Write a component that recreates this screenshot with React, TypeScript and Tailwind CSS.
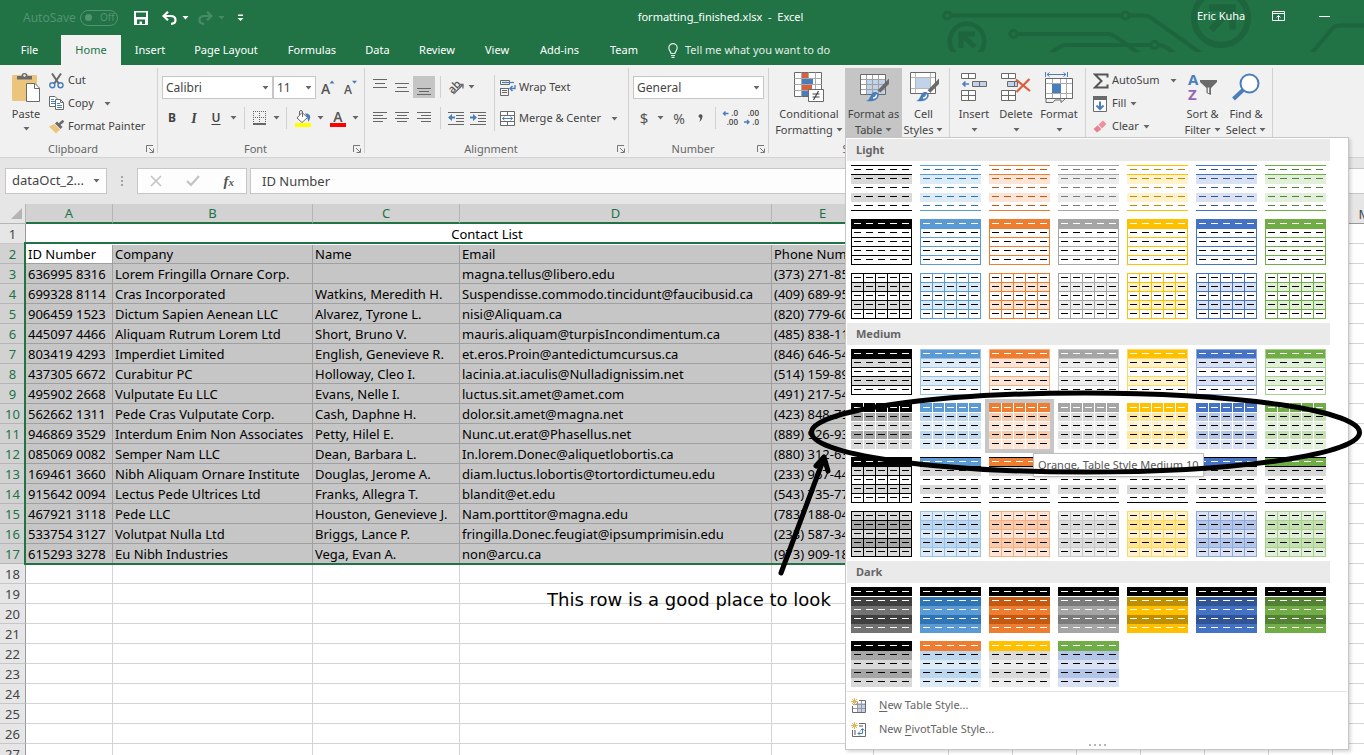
import React from "react";

type Kids = { children?: React.ReactNode };

const G = "#6a6a6a";
const B = "#4a7ebb";

function Caret({ className = "fill-[#666666]" }: { className?: string }) {
  return (
    <svg width="7" height="4" viewBox="0 0 7 4" className={"shrink-0 " + className} aria-hidden="true">
      <path d="M0.5 0h6L3.5 3.4z" />
    </svg>
  );
}

/* ---------- title bar ---------- */

function Circuit() {
  return (
    <svg className="absolute right-0 top-0" width="484" height="52" viewBox="0 0 484 52" fill="none" stroke="#1d653c" strokeWidth="4" aria-hidden="true">
      <circle cx="67.5" cy="15.5" r="3.6" strokeWidth="3" />
      <path d="M72 15.5H241" />
      <circle cx="245.500" cy="15.500" r="3.6" strokeWidth="3" />
      <path d="M250 15.500H264q4 0 8 3L322 54" />
      <circle cx="133.500" cy="34" r="3.6" strokeWidth="3" />
      <path d="M138 34H228q4 0 8 3L260 54" />
      <path d="M168 55L178 48q4-3 8-3H270" />
      <circle cx="274.500" cy="45" r="3.6" strokeWidth="3" />
      <path d="M279 45q4 0 8 3L297 55" />
      <path d="M430 55L452 29q3-3.500 8-3.500H484" />
      <circle cx="87" cy="41" r="17.2" strokeWidth="4.600" />
      <path d="M95 34H81V48M81 34L95 47" strokeWidth="5" />
      <circle cx="341" cy="18" r="27" strokeWidth="6" />
      <path d="M329 7.500H352.500V29.500M352.500 7.500L331 30" strokeWidth="6.500" />
    </svg>
  );
}

function TitleBar() {
  return (
    <div className="relative flex h-[35px] items-center text-white">
      <div className="flex items-center pl-[23px] text-[#559271]">
        <span className="w-[57px] text-[12px]">AutoSave</span>
        <button className="flex h-[16px] w-[38px] items-center gap-[8px] rounded-full border border-[#559271] pl-[4px] text-[10px]" aria-label="AutoSave">
          <span className="size-[7px] rounded-full bg-[#559271]" />
          Off
        </button>
      </div>
      <button className="ml-[16px]" aria-label="Save">
        <svg width="14" height="14" viewBox="0 0 14 14" className="block">
          <path fill="#fff" fillRule="evenodd" d="M0 0H14V14H0zM2 1.500V6h10V1.500zM3 8.500V13H5.500V10.500H8V13h3V8.500z" />
        </svg>
      </button>
      <button className="ml-[14px] flex items-center gap-[5px]" aria-label="Undo">
        <svg width="15" height="14" viewBox="0 0 15 14" fill="none" stroke="#fff" strokeWidth="2.200">
          <path d="M6 0.800L1.500 5L6 9.200M2 5H8.500C12.200 5 13.500 7 13.500 9C13.500 11.500 11.500 12.800 9 12.800" />
        </svg>
        <Caret className="fill-white" />
      </button>
      <button className="ml-[9px] flex items-center gap-[5px]" aria-label="Redo">
        <svg width="15" height="14" viewBox="0 0 15 14" fill="none" stroke="#488b67" strokeWidth="2.200">
          <path d="M9 0.800L13.500 5L9 9.200M13 5H6.500C2.800 5 1.500 7 1.500 9C1.500 11.500 3.500 12.800 6 12.800" />
        </svg>
        <Caret className="fill-[#488b67]" />
      </button>
      <button className="ml-[12px]" aria-label="Customize Quick Access Toolbar">
        <svg width="7" height="8" viewBox="0 0 7 8" fill="#fff">
          <path d="M1 0.500H6V2H1zM0.500 4H6.500L3.500 7z" />
        </svg>
      </button>
      <Circuit />
      <h1 className="min-w-0 flex-1 truncate pb-[2px] text-center text-[11px] leading-[16px] whitespace-pre">formatting_finished.xlsx  -  Excel</h1>
      <span className="relative w-[75px] pb-[2px] text-[11px]">Eric Kuha</span>
      <button className="relative w-[47px]" aria-label="Ribbon Display Options">
        <svg width="13" height="10" viewBox="0 0 13 10" fill="none" stroke="#fff" className="mb-[3px]">
          <path d="M.5 .5h12v9H.5zM0 2.500h13M6.500 9V4.500M4.500 6.500L6.500 4.500L8.500 6.500" />
        </svg>
      </button>
      <button className="relative w-[45px] pb-[3px]" aria-label="Minimize">
        <span className="block h-px w-[11px] bg-white" />
      </button>
    </div>
  );
}

function Tab({ w, active, children }: Kids & { w: string; active?: boolean }) {
  return (
    <button role="tab" aria-selected={!!active} className={"h-[30px] shrink-0 text-center text-[11px] " + w + (active ? " bg-[#f1f1f1] text-[#217346]" : " text-white")}>
      {children}
    </button>
  );
}

function Tabs() {
  return (
    <div role="tablist" className="flex">
      <Tab w="w-[59px]">File</Tab>
      <span className="w-[2px]" />
      <Tab w="w-[60px]" active>Home</Tab>
      <Tab w="w-[58px]">Insert</Tab>
      <Tab w="w-[94px]">Page Layout</Tab>
      <Tab w="w-[78px]">Formulas</Tab>
      <Tab w="w-[53px]">Data</Tab>
      <Tab w="w-[66px]">Review</Tab>
      <Tab w="w-[54px]">View</Tab>
      <Tab w="w-[71px]">Add-ins</Tab>
      <Tab w="w-[58px]">Team</Tab>
      <button className="ml-[15px] flex items-center gap-[7px] text-[11px] text-[#e3eee8]">
        <svg width="10" height="15" viewBox="0 0 10 15" fill="none" stroke="#e3eee8" strokeWidth="1.200">
          <path d="M3 10.500C3 8.500 .8 7.500 .8 4.800A4.200 4.200 0 0 1 9.200 4.800C9.200 7.500 7 8.500 7 10.500zM3 12.500h4M3.500 14.300h3" />
        </svg>
        Tell me what you want to do
      </button>
    </div>
  );
}

/* ---------- ribbon ---------- */

function Group({ label, w, launcher, children }: Kids & { label: string; w: string; launcher?: boolean }) {
  return (
    <section aria-label={label} className={"flex shrink-0 flex-col pt-[3px] pb-[4px] " + w}>
      <div className="flex min-h-0 flex-1 flex-col border-r border-[#d2d2d2]">
        <div className="flex h-[73px] shrink-0">{children}</div>
        <div className="flex h-[16px] shrink-0 items-center pr-[3px]">
          <span className="flex-1 text-center text-[11px] leading-[16px] text-[#666666]">{label}</span>
          {launcher && (
            <button aria-label={label + " settings"}>
              <svg width="8" height="8" viewBox="0 0 8 8" fill="none" stroke="#777" className="block">
                <path d="M.5 7V.5H7M3 3L7 7M7.500 3.500V7.500H3.500" />
              </svg>
            </button>
          )}
        </div>
      </div>
    </section>
  );
}

function Ib({ w = "w-[22px]", label, active, children }: Kids & { w?: string; label: string; active?: boolean }) {
  return (
    <button aria-label={label} className={"flex h-[22px] shrink-0 items-center justify-center " + w + (active ? " bg-[#c5c5c5]" : "")}>
      {children}
    </button>
  );
}

function Sep({ w = "w-[10px]", h = "h-[22px]" }: { w?: string; h?: string }) {
  return (
    <span className={"flex shrink-0 justify-center " + w + " " + h}>
      <span className="w-px bg-[#d2d2d2]" />
    </span>
  );
}

function Pick({ w, label, value }: { w: string; label: string; value: string }) {
  return (
    <span className={"relative flex h-[23px] " + w}>
      <select aria-label={label} className="w-full appearance-none border border-[#c6c6c6] bg-white pl-[3px] text-[12px] text-[#444444]">
        <option>{value}</option>
      </select>
      <span className="pointer-events-none absolute right-[4px] top-[10px]">
        <Caret className="block fill-[#666666]" />
      </span>
    </span>
  );
}

function SmallRow({ icon, caret, gap = "gap-[6px]", children }: Kids & { icon: React.ReactNode; caret?: boolean; gap?: string }) {
  return (
    <button className={"flex h-[23px] items-center text-left whitespace-nowrap " + gap}>
      <span className="flex items-center">
        <span className="flex w-[19px] shrink-0 items-center">{icon}</span>
        {children}
      </span>
      {caret && <Caret />}
    </button>
  );
}

function Big({ icon, w, line1, line2, active }: { icon: React.ReactNode; w: string; line1: string; line2?: string; active?: boolean }) {
  return (
    <button className={"flex h-[70px] shrink-0 flex-col items-center leading-[16px] " + w + (active ? " bg-[#c5c5c5]" : "")}>
      <span className="flex h-[38px] items-center justify-center">{icon}</span>
      <span className="whitespace-nowrap">{line1}</span>
      <span className="flex h-[16px] items-center gap-[3px] whitespace-nowrap">
        {line2}
        <Caret />
      </span>
    </button>
  );
}

function Lines({ ys, ws, align }: { ys: number[]; ws: number[]; align: "l" | "c" | "r" }) {
  return (
    <svg width="14" height="16" viewBox="0 0 14 16" fill="#666">
      {ys.map((y, i) => (
        <rect key={y} x={align === "l" ? 0 : align === "r" ? 14 - ws[i] : (14 - ws[i]) / 2} y={y} width={ws[i]} height="1" />
      ))}
    </svg>
  );
}

function PasteIcon() {
  return (
    <svg width="29" height="31" viewBox="0 0 29 31">
      <rect x="0" y="3" width="25" height="26" fill="#ecc57c" rx="1" />
      <path d="M5 7.500V4H9.500A3 3 0 0 1 15.500 4H20V7.500z" fill={G} />
      <circle cx="12.500" cy="3.500" r="1.200" fill="#f1f1f1" />
      <path d="M14.500 11.500H23L27.500 16V29.500H14.500z" fill="#fff" stroke={G} />
      <path d="M22.500 11.500V16.500H27.500" fill="none" stroke={G} />
    </svg>
  );
}

function CutIcon() {
  return (
    <svg width="15" height="16" viewBox="0 0 15 16" fill="none">
      <path d="M3 0.500L10 11M12 0.500L5 11" stroke={G} strokeWidth="2" />
      <circle cx="3.300" cy="12.200" r="2.500" stroke={B} strokeWidth="1.400" />
      <circle cx="11.500" cy="12.200" r="2.500" stroke={B} strokeWidth="1.400" />
    </svg>
  );
}

function CopyIcon() {
  return (
    <svg width="15" height="15" viewBox="0 0 15 15">
      <path d="M.5 .5H6L8.500 3V10.500H.5z" fill="#fff" stroke={G} />
      <path d="M2 3.500H5M2 5.500H6M2 7.500H6" stroke={B} />
      <path d="M6.500 3.500H11.500L14.500 6.500V13.500H6.500z" fill="#fff" stroke={G} />
      <path d="M11.500 3.500V6.500H14.500" fill="none" stroke={G} />
      <path d="M8 7.500H11M8 9.500H13M8 11.500H13" stroke={B} />
    </svg>
  );
}

function PainterIcon() {
  return (
    <svg width="16" height="14" viewBox="0 0 16 14">
      <path d="M0 6.500L5.500 4L11 9.500L7 13.500z" fill="#ecc57c" />
      <path d="M6 3.500L8 1.500L13.500 7L11.500 9z" fill={G} />
      <path d="M10 4.500L14.500 .8" stroke={G} strokeWidth="2.600" />
    </svg>
  );
}

function ClipboardGroup() {
  return (
    <Group label="Clipboard" w="w-[158px]" launcher>
      <div className="flex w-[49px] flex-col items-center pt-[4px] pl-[3px]">
        <button className="flex flex-col items-center">
          <PasteIcon />
          <span className="mt-[3px] leading-[16px]">Paste</span>
          <span className="mt-[5px]">
            <Caret className="block fill-[#666666]" />
          </span>
        </button>
      </div>
      <div className="flex flex-col pt-[1px]">
        <SmallRow icon={<CutIcon />}>Cut</SmallRow>
        <SmallRow icon={<CopyIcon />} caret gap="gap-[10px]">Copy</SmallRow>
        <SmallRow icon={<PainterIcon />}>Format Painter</SmallRow>
      </div>
    </Group>
  );
}

function FontGroup() {
  return (
    <Group label="Font" w="w-[207px]" launcher>
      <div className="flex flex-col gap-[8px] pt-[8px]">
        <div className="flex items-center pl-[4px]">
          <Pick w="w-[111px]" label="Font" value="Calibri" />
          <Pick w="w-[43px]" label="Font size" value="11" />
          <Ib w="w-[24px]" label="Increase font size">
            <svg width="14" height="16" viewBox="0 0 14 16" className="overflow-visible">
              <text x="0" y="14" fontFamily="Open Sans, sans-serif" fontSize="14" fontWeight="600" fill="#555">A</text>
              <path d="M8.500 3.500H13.500L11 .5z" fill={B} />
            </svg>
          </Ib>
          <Ib w="w-[21px]" label="Decrease font size">
            <svg width="13" height="16" viewBox="0 0 13 16" className="overflow-visible">
              <text x="0" y="14" fontFamily="Open Sans, sans-serif" fontSize="12" fontWeight="600" fill="#555">A</text>
              <path d="M8 .8H13L10.500 3.800z" fill={B} />
            </svg>
          </Ib>
        </div>
        <div className="flex items-center pl-[3px] text-[#444444]">
          <Ib label="Bold"><b className="text-[12px]">B</b></Ib>
          <Ib label="Italic"><i className="font-['Liberation_Serif',serif] text-[14px] font-bold">I</i></Ib>
          <Ib label="Underline"><span className="text-[12px] font-semibold underline underline-offset-2">U</span></Ib>
          <Ib w="w-[12px]" label="Underline options"><Caret /></Ib>
          <Sep />
          <Ib w="w-[21px]" label="Bottom border">
            <svg width="13" height="14" viewBox="0 0 13 14" fill="none" stroke="#666">
              <path d="M0 .5H13M0 6.500H13M.5 0V12M6.500 0V12M12.500 0V12" strokeDasharray="1 1" />
              <path d="M0 13H13" strokeWidth="2" />
            </svg>
          </Ib>
          <Ib w="w-[12px]" label="Border options"><Caret /></Ib>
          <Sep w="w-[9px]" />
          <Ib w="w-[24px]" label="Fill color">
            <svg width="16" height="17" viewBox="0 0 16 17">
              <path d="M7 2.500L12.500 7.500L7 12.500L2 8z" fill="#fff" stroke={G} />
              <path d="M7.500 7V2A1.500 1.500 0 0 0 4.500 2V5" fill="none" stroke={G} />
              <path d="M10 3.500C14 3 16 5.500 15 8.500L13.500 12L12 7z" fill={B} />
              <rect y="13" width="16" height="4" fill="#ffff00" />
            </svg>
          </Ib>
          <Ib w="w-[10px]" label="Fill color options"><Caret /></Ib>
          <Ib w="w-[26px]" label="Font color">
            <svg width="16" height="17" viewBox="0 0 16 17" className="overflow-visible">
              <text x="8" y="12" textAnchor="middle" fontFamily="Open Sans, sans-serif" fontSize="14" fontWeight="600" fill="#555">A</text>
              <rect y="13" width="16" height="4" fill="#ff0000" />
            </svg>
          </Ib>
          <Ib w="w-[8px]" label="Font color options"><Caret /></Ib>
        </div>
      </div>
    </Group>
  );
}

function Indent({ out }: { out?: boolean }) {
  return (
    <svg width="16" height="14" viewBox="0 0 16 14" fill="#666">
      <path d="M0 1H16V2H0zM8 4H16V5H8zM8 7H16V8H8zM8 10H16V11H8zM0 13H16V14H0z" />
      {out ? <path d="M0 6.500L4 3V5.500H7V7.500H4V10z" fill={B} /> : <path d="M7 6.500L3 3V5.500H0V7.500H3V10z" fill={B} />}
    </svg>
  );
}

function AlignmentGroup() {
  return (
    <Group label="Alignment" w="w-[264px]" launcher>
      <div className="flex flex-col gap-[9px] pt-[8px] pl-[4px]">
        <div className="flex">
          <Ib label="Top align"><Lines align="c" ys={[0, 4, 8]} ws={[14, 10, 14]} /></Ib>
          <Ib label="Middle align"><Lines align="c" ys={[4, 8, 12]} ws={[14, 10, 14]} /></Ib>
          <Ib label="Bottom align" active><Lines align="c" ys={[9, 12, 15]} ws={[14, 10, 14]} /></Ib>
          <Sep />
          <Ib w="w-[22px]" label="Orientation">
            <svg width="17" height="16" viewBox="0 0 17 16" className="overflow-visible">
              <text x="1" y="13" transform="rotate(-45 5 10)" fontFamily="Open Sans, sans-serif" fontSize="11" fontWeight="600" fill="#555">ab</text>
              <path d="M5.500 15L15 5.500M11 5.500H15V9.500" fill="none" stroke={G} strokeWidth="1.300" />
            </svg>
          </Ib>
          <Ib w="w-[8px]" label="Orientation options"><Caret /></Ib>
        </div>
        <div className="flex">
          <Ib label="Align left"><Lines align="l" ys={[2, 5, 8, 11]} ws={[14, 10, 14, 10]} /></Ib>
          <Ib label="Center"><Lines align="c" ys={[2, 5, 8, 11]} ws={[14, 10, 14, 10]} /></Ib>
          <Ib label="Align right"><Lines align="r" ys={[2, 5, 8, 11]} ws={[14, 10, 14, 10]} /></Ib>
          <Sep />
          <Ib label="Decrease indent"><Indent out /></Ib>
          <Ib label="Increase indent"><Indent /></Ib>
        </div>
      </div>
      <div className="pt-[7px]">
        <Sep w="w-[10px]" h="h-[56px]" />
      </div>
      <div className="flex flex-col gap-[8px] pt-[8px] pl-[1px]">
        <SmallRow
          icon={
            <svg width="16" height="16" viewBox="0 0 16 16" fill="none" stroke={G}>
              <path d="M.5 .5H9.500V4.500H.5zM.5 8.500H8.500M.5 8V15.500H8.500V8M2 10.500H7M2 12.500H7" />
              <path d="M2 2.500H14" stroke={B} strokeWidth="1.200" />
              <path d="M15 5V8.500H10.500M12.500 6L10 8.500L12.500 11" stroke={B} strokeWidth="1.400" />
            </svg>
          }
        >
          Wrap Text
        </SmallRow>
        <SmallRow
          caret
          gap="gap-[10px]"
          icon={
            <svg width="16" height="16" viewBox="0 0 16 16" fill="#fff" stroke={G}>
              <path d="M.5 .5H14.500V14.500H.5zM.5 4.500H14.500M.5 10.500H14.500M7.500 .5V4.500M7.500 10.500V14.500" />
              <path d="M2.500 7.500H12.500M4.500 5.800L2.500 7.500L4.500 9.200M10.500 5.800L12.500 7.500L10.500 9.200" fill="none" stroke={B} />
            </svg>
          }
        >
          Merge &amp; Center
        </SmallRow>
      </div>
    </Group>
  );
}

function DecimalIcon({ more }: { more?: boolean }) {
  return (
    <svg width="16" height="16" viewBox="0 0 16 16" fontFamily="Open Sans, sans-serif" fontSize="8" fontWeight="600" fill="#444" className="overflow-visible">
      <text x="16" y="6" textAnchor="end">{more ? ".0" : ".00"}</text>
      <text x="16" y="15" textAnchor="end">{more ? ".00" : ".0"}</text>
      {more ? <path d="M6.500 3.500H1.500M3.500 1.500L1.500 3.500L3.500 5.500" fill="none" stroke={B} strokeWidth="1.400" /> : <path d="M1 12H6M4 10L6 12L4 14" fill="none" stroke={B} strokeWidth="1.400" />}
    </svg>
  );
}

function NumberGroup() {
  return (
    <Group label="Number" w="w-[140px]" launcher>
      <div className="flex flex-col gap-[8px] pt-[8px] pl-[4px]">
        <Pick w="w-[131px]" label="Number format" value="General" />
        <div className="flex">
          <Ib label="Accounting format"><span className="text-[15px] text-[#555555]">$</span></Ib>
          <Ib w="w-[10px]" label="Accounting options"><Caret /></Ib>
          <Ib w="w-[28px]" label="Percent style"><span className="text-[14px] text-[#555555]">%</span></Ib>
          <Ib w="w-[14px]" label="Comma style">
            <svg width="5" height="8" viewBox="0 0 5 8" fill="#555"><path d="M.5 2A2 2 0 1 1 4.500 2.500C4.300 5 3 7 1 8C2 6.500 2.300 5 2.200 4A2 2 0 0 1 .5 2z" /></svg>
          </Ib>
          <Sep w="w-[17px]" />
          <Ib w="w-[12px]" label="Increase decimal"><DecimalIcon more /></Ib>
          <Ib w="w-[30px]" label="Decrease decimal"><DecimalIcon /></Ib>
        </div>
      </div>
    </Group>
  );
}

function Brush() {
  return (
    <>
      <path d="M31 6.500V12L22.500 20.500L19.500 18.500z" fill={G} />
      <path d="M8 29C12 28 12 24 14 21.500C16.500 18.500 22 20.500 20.500 24.500C19 29 13 30 8 29z" fill={B} />
      <path d="M15 26C17 26 18.500 24.500 18.500 22.500" stroke="#fff" strokeWidth="1.400" fill="none" />
    </>
  );
}

function CondIcon() {
  return (
    <svg width="30" height="30" viewBox="0 0 30 30">
      <path d="M.5 .5H27.500V24.500H.5z" fill="#fff" stroke={G} />
      <path d="M.5 6.500H27.500M.5 12.500H27.500M.5 18.500H27.500M7.500 .5V24.500M14.500 .5V24.500M21.500 .5V24.500" stroke="#aaa" />
      <path d="M8 1H14V6H8zM8 13H18V18H8z" fill="#d9603b" />
      <path d="M8 7H19V12H8zM8 19H14V24H8z" fill={B} />
      <path d="M14.500 17.500H29.500V29.500H14.500z" fill="#fff" stroke={G} />
      <path d="M18.500 22H25.500M18.500 25H25.500M24.500 19L19.500 28" stroke="#444" strokeWidth="1.200" />
    </svg>
  );
}

function FormatTableIcon() {
  return (
    <svg width="32" height="30" viewBox="0 0 32 30">
      <path d="M2.500 2.500H27.500V22.500H2.500z" fill="#fff" />
      <path d="M9 8H27V22H9z" fill="#c1d3ea" />
      <path d="M2.500 7.500H27.500M2.500 12.500H27.500M2.500 17.500H27.500M8.500 2.500V22.500M14.500 2.500V22.500M20.500 2.500V22.500" stroke="#a0a0a0" />
      <path d="M2.500 2.500H27.500V22.500H2.500z" fill="none" stroke={G} />
      <Brush />
    </svg>
  );
}

function CellStylesIcon() {
  return (
    <svg width="32" height="30" viewBox="0 0 32 30">
      <path d="M2.500 .5H27.500V21.500H2.500z" fill="#fff" stroke={G} />
      <path d="M3 5.500H27M3 16.500H27M7.500 1V21M22.500 1V21" stroke="#b5b5b5" />
      <path d="M8 6H22V16H8z" fill="#c1d3ea" />
      <Brush />
    </svg>
  );
}

function InsertIcon() {
  return (
    <svg width="26" height="28" viewBox="0 0 26 28" fill="#fff" stroke={G}>
      <path d="M.5 .5H14.500V5.500H.5zM7.500 .5V5.500M.5 17.500H14.500V27.500H.5zM.5 22.500H14.500M7.500 17.500V27.500" />
      <path d="M11.500 8.500H25.500V13.500H11.500zM18.500 8.500V13.500" fill="#c1d3ea" />
      <path d="M8 11H2M4.500 8.500L2 11L4.500 13.500" fill="none" stroke={B} strokeWidth="1.600" />
    </svg>
  );
}

function DeleteIcon() {
  return (
    <svg width="30" height="28" viewBox="0 0 30 28" fill="#fff" stroke={G}>
      <path d="M.5 .5H14.500V5.500H.5zM7.500 .5V5.500M.5 17.500H14.500V27.500H.5zM.5 22.500H14.500M7.500 17.500V27.500" />
      <path d="M6.500 8.500H16.500V13.500H6.500zM13.500 8.500V13.500" fill="#c1d3ea" />
      <path d="M15 6.500L29 18M28.500 6L15.500 19" fill="none" stroke="#d9603b" strokeWidth="2.200" />
    </svg>
  );
}

function FormatIcon() {
  return (
    <svg width="28" height="31" viewBox="0 0 28 31" fill="none">
      <path d="M.5 0V5M22.500 0V5M2 2.500H21M4.500 .5L2 2.500L4.500 4.500M18.500 .5L21 2.500L18.500 4.500" stroke={B} />
      <path d="M.5 6.500H27.500V26.500H.5z" fill="#fff" />
      <path d="M1 11.500H27M1 21.500H27M7.500 7V26M15.500 7V26M21.500 7V26" stroke="#aaa" />
      <path d="M27.500 26.500V6.500H.5V26.500H27.500M1 26.500V30.500H8L10 28H16V30.500L20 27" stroke={G} />
      <path d="M7 12H16V21H7z" fill={B} />
    </svg>
  );
}

function CellsGroup() {
  return (
    <Group label="Cells" w="w-[136px]">
      <div className="flex pl-[3px]">
        <Big w="w-[42px]" icon={<InsertIcon />} line1="Insert" />
        <Big w="w-[42px]" icon={<DeleteIcon />} line1="Delete" />
        <Big w="w-[44px]" icon={<FormatIcon />} line1="Format" />
      </div>
    </Group>
  );
}

function EditingGroup() {
  return (
    <Group label="Editing" w="w-[187px]">
      <div className="flex w-[97px] flex-col pt-[1px] pl-[7px]">
        <SmallRow caret gap="gap-[10px]" icon={<svg width="16" height="16" viewBox="0 0 16 16" fill="none" stroke="#555" strokeWidth="2"><path d="M14.500 4.500V1.500H2L8.500 8L2 14.500H14.500V11.500" /></svg>}>AutoSum</SmallRow>
        <SmallRow
          caret
          gap="gap-[4px]"
          icon={
            <svg width="14" height="16" viewBox="0 0 14 16">
              <path d="M.5 .5H13.500V15.500H.5z" fill="#fff" stroke={G} />
              <path d="M0 0H14V4H0z" fill={G} />
              <path d="M7 5.500V13M3.500 9.500L7 13L10.500 9.500" fill="none" stroke={B} strokeWidth="2" />
            </svg>
          }
        >
          Fill
        </SmallRow>
        <SmallRow caret gap="gap-[4px]" icon={<svg width="14" height="13" viewBox="0 0 14 13"><path d="M5.500 4.500L10 .5L13.500 4L9 8.500z" fill="#f0909c" /><path d="M4.700 5.200L.5 9L4 12.500L8.300 9.200z" fill="#e8808e" /></svg>}>Clear</SmallRow>
      </div>
      <Big
        w="w-[39px]"
        line1="Sort &amp;"
        line2="Filter"
        icon={
          <svg width="29" height="28" viewBox="0 0 29 28" fontFamily="Open Sans, sans-serif" fontSize="15" fontWeight="700" className="overflow-visible">
            <text x="0" y="12" fill={B}>A</text>
            <text x="0" y="27" fill="#9566b5">Z</text>
            <path d="M12 7H29V9L23 15V22L18.500 20V15L12 9z" fill={G} />
            <path d="M20.500 14.500V20" stroke="#f1f1f1" strokeWidth="1.500" />
          </svg>
        }
      />
      <Big
        w="w-[48px]"
        line1="Find &amp;"
        line2="Select"
        icon={
          <svg width="28" height="28" viewBox="0 0 28 28" fill="none" stroke={B}>
            <circle cx="17.500" cy="10.500" r="9" strokeWidth="2" fill="#fff" />
            <path d="M11 17L1.500 26" strokeWidth="4" />
          </svg>
        }
      />
    </Group>
  );
}

/* ---------- table style gallery ---------- */

type Tone = { name: string; base: string; light: string; mid: string; line: string; dark: string };

const TONES: Tone[] = [
  { name: "Black", base: "#000000", light: "#d9d9d9", mid: "#a6a6a6", line: "#000000", dark: "#000000" },
  { name: "Blue", base: "#5b9bd5", light: "#ddebf7", mid: "#bdd7ee", line: "#9bc2e6", dark: "#2f75b5" },
  { name: "Orange", base: "#ed7d31", light: "#fce4d6", mid: "#f8cbad", line: "#f4b084", dark: "#c65911" },
  { name: "Gray", base: "#a5a5a5", light: "#ededed", mid: "#dbdbdb", line: "#c9c9c9", dark: "#7b7b7b" },
  { name: "Gold", base: "#ffc000", light: "#fff2cc", mid: "#ffe699", line: "#ffd966", dark: "#bf8f00" },
  { name: "Indigo", base: "#4472c4", light: "#d9e1f2", mid: "#b4c6e7", line: "#8ea9db", dark: "#305496" },
  { name: "Green", base: "#70ad47", light: "#e2efda", mid: "#c6e0b4", line: "#a9d08e", dark: "#548235" },
];

type Swatch = {
  rows: string[];
  dashes: string[];
  rules?: { at: number[]; color: string };
  columns?: { at: number[]; color: string };
};

const ALL = [0, 9, 18, 27, 36, 45];
const COLS = [0, 12, 24, 36, 48, 60];
const W = "#ffffff";
const K = "#000000";
const headed = [W, K, K, K, K];
const black5 = [K, K, K, K, K];
const white5 = [W, W, W, W, W];

const KINDS: Record<string, (t: Tone) => Swatch> = {
  light1: (t) => ({ rows: [W, t.light, W, t.light, W], dashes: [t.dark, t.dark, t.dark, t.dark, t.dark], rules: { at: [0, 9, 45], color: t.base } }),
  light2: (t) => ({ rows: [t.base, W, W, W, W], dashes: headed, rules: { at: ALL, color: t.base }, columns: { at: [0, 60], color: t.base } }),
  light3: (t) => ({ rows: [W, t.light, W, t.light, W], dashes: black5, rules: { at: ALL, color: t.base }, columns: { at: COLS, color: t.base } }),
  medium1: (t) => ({ rows: [t.base, t.light, W, t.light, W], dashes: headed, rules: { at: ALL, color: t.line }, columns: { at: [0, 60], color: t.line } }),
  medium2: (t) => ({ rows: [t.base, t.mid, t.light, t.mid, t.light], dashes: headed, rules: { at: [9, 18, 27, 36], color: W }, columns: { at: [12, 24, 36, 48], color: W } }),
  medium3: (t) =>
    t.name === "Black"
      ? { rows: [K, "#d9d9d9", W, "#d9d9d9", W], dashes: headed, rules: { at: ALL, color: K }, columns: { at: COLS, color: K } }
      : { rows: [t.base, "#d9d9d9", W, "#d9d9d9", W], dashes: headed, rules: { at: [0, 9, 45], color: K } },
  medium4: (t) => ({ rows: [t.light, t.mid, t.light, t.mid, t.light], dashes: black5, rules: { at: ALL, color: t.line }, columns: { at: COLS, color: t.line } }),
  dark1: (t) => {
    const a = t.name === "Black" ? "#404040" : t.dark;
    const b = t.name === "Black" ? "#737373" : t.base;
    return { rows: [K, a, b, a, b], dashes: white5, rules: { at: [9], color: W } };
  },
};

const DARK2: [Tone, Tone][] = [
  [TONES[0], TONES[0]],
  [TONES[2], TONES[1]],
  [TONES[4], TONES[3]],
  [TONES[6], TONES[5]],
];

function Thumb({ s }: { s: Swatch }) {
  return (
    <svg width="61" height="46" viewBox="0 0 61 46" shapeRendering="crispEdges" className="block" aria-hidden="true">
      {s.rows.map((c, i) => (
        <rect key={i} y={i === 0 ? 0 : i * 9 + 1} width="61" height={i === 0 ? 10 : 9} fill={c} />
      ))}
      {s.rules?.at.map((y) => <rect key={"r" + y} y={y} width="61" height="1" fill={s.rules!.color} />)}
      {s.columns?.at.map((x) => <rect key={"c" + x} x={x} width="1" height="46" fill={s.columns!.color} />)}
      {s.dashes.map((c, i) => [3, 15, 27, 39, 51].map((x) => <rect key={i + "-" + x} x={x} y={i * 9 + 4} width="7" height="1" fill={c} />))}
    </svg>
  );
}

function StyleButton({ s, label, hover }: { s: Swatch; label: string; hover?: boolean }) {
  return (
    <button aria-label={label} className={"relative block h-[54px] w-[69px] shrink-0 p-[4px] " + (hover ? "z-10 bg-[#c6c6c6]" : "")}>
      <Thumb s={s} />
      {hover && (
        <span role="tooltip" className="absolute left-[48px] top-[54px] flex h-[24px] items-center whitespace-nowrap border border-[#bebebe] bg-white px-[4px] text-[11px] text-[#575757] shadow-sm">
          Orange, Table Style Medium 10
        </span>
      )}
    </button>
  );
}

function Section({ title, kinds, children }: Kids & { title: string; kinds: string[] }) {
  return (
    <div>
      <h2 className="mr-[17px] flex h-[22px] items-center bg-[#eaeaea] pl-[9px] text-[11px] font-bold text-[#666666]">{title}</h2>
      {kinds.map((k) => (
        <div key={k} className="flex">
          {TONES.map((t) => (
            <StyleButton key={t.name} s={KINDS[k](t)} label={t.name + " " + k} hover={k === "medium2" && t.name === "Orange"} />
          ))}
        </div>
      ))}
      {children}
    </div>
  );
}

function Sparkle() {
  return <path d="M3.500 0V7M0 3.500H7M1 1L6 6M6 1L1 6" stroke="#e5b35c" />;
}

function Gallery() {
  return (
    <div role="menu" className="absolute left-0 top-[69px] z-20 w-[504px] border border-[#c6c6c6] bg-white p-px shadow-[2px_2px_3px_rgba(0,0,0,0.15)]">
      <Section title="Light" kinds={["light1", "light2", "light3"]} />
      <Section title="Medium" kinds={["medium1", "medium2", "medium3", "medium4"]} />
      <Section title="Dark" kinds={["dark1"]}>
        <div className="flex">
          {DARK2.map(([h, b]) => (
            <StyleButton key={h.name} label={h.name + " on " + b.name} s={{ rows: [h.base, b.mid, b.light, b.mid, b.light], dashes: headed }} />
          ))}
        </div>
      </Section>
      <div className="border-t border-[#e1e1e1] pt-px text-[11px] text-[#666666]">
        <button role="menuitem" className="flex h-[24px] w-full items-center pl-[4px]">
          <svg width="15" height="15" viewBox="0 0 15 15" fill="none" className="mr-[13px]">
            <path d="M6 5H14V14H6z" fill="#c1d3ea" />
            <path d="M2 6.500H14M2 10.500H14M6.500 3V14M10.500 3V14" stroke="#999" />
            <path d="M8 2.500H14.500V14.500H1.500V8" stroke={G} />
            <Sparkle />
          </svg>
          <span><u className="underline-offset-2">N</u>ew Table Style...</span>
        </button>
        <button role="menuitem" className="flex h-[24px] w-full items-center pl-[4px]">
          <svg width="15" height="15" viewBox="0 0 15 15" fill="none" className="mr-[13px]">
            <path d="M8 3H12V5H8zM3 8H5V13H3z" fill="#aaa" />
            <path d="M8 1.500H14.500V14.500H1.500V8" stroke={G} />
            <path d="M7 11.500H11.500V7M9 9.500L7 11.500L9 13.500M9.500 8.500L11.500 6.500L13.500 8.500" stroke={B} />
            <Sparkle />
          </svg>
          <span>New <u className="underline-offset-2">P</u>ivotTable Style...</span>
        </button>
        <div className="flex h-[7px] items-center justify-center gap-[3px]">
          {[0, 1, 2, 3].map((i) => (
            <span key={i} className="size-[2px] bg-[#b5b5c0]" />
          ))}
        </div>
      </div>
    </div>
  );
}

function StylesGroup() {
  return (
    <Group label="Styles" w="w-[181px]">
      <div className="flex pl-[4px]">
        <Big w="w-[72px]" icon={<CondIcon />} line1="Conditional" line2="Formatting" />
        <div className="relative">
          <Big w="w-[57px]" active icon={<FormatTableIcon />} line1="Format as" line2="Table" />
          <Gallery />
        </div>
        <Big w="w-[43px]" icon={<CellStylesIcon />} line1="Cell" line2="Styles" />
      </div>
    </Group>
  );
}

function Ribbon() {
  return (
    <div className="flex h-[93px] border-b border-[#d2d2d2] bg-[#f1f1f1] text-[11px] text-[#444444]">
      <ClipboardGroup />
      <FontGroup />
      <AlignmentGroup />
      <NumberGroup />
      <StylesGroup />
      <CellsGroup />
      <EditingGroup />
    </div>
  );
}

/* ---------- formula bar ---------- */

function FormulaBar() {
  return (
    <div className="flex h-[46px] items-start pt-[10px] pl-[5px] text-[13px] text-[#444444]">
      <span className="relative flex h-[26px] w-[102px]">
        <select aria-label="Name box" className="w-full appearance-none border border-[#c6c6c6] bg-[#fdfdfd] pl-[6px] text-[13px]">
          <option>dataOct_2...</option>
        </select>
        <span className="pointer-events-none absolute right-[7px] top-[11px]"><Caret className="block fill-[#666666]" /></span>
      </span>
      <svg width="30" height="26" viewBox="0 0 30 26" fill="#a5a5a5" aria-hidden="true">
        <path d="M14 8h2v2h-2zM14 12h2v2h-2zM14 16h2v2h-2z" />
      </svg>
      <div className="flex h-[26px] w-[110px] items-center justify-around border border-[#c6c6c6] bg-[#fdfdfd]">
        <button aria-label="Cancel">
          <svg width="12" height="12" viewBox="0 0 12 12" fill="none" stroke="#c3c3c3" strokeWidth="1.600"><path d="M1 1L11 11M11 1L1 11" /></svg>
        </button>
        <button aria-label="Enter">
          <svg width="14" height="12" viewBox="0 0 14 12" fill="none" stroke="#c3c3c3" strokeWidth="2.200"><path d="M1 6L5 10L13 1" /></svg>
        </button>
        <button aria-label="Insert function" className="flex items-baseline font-['Liberation_Serif',serif] text-[15px] leading-[16px] font-bold text-[#555555] italic">
          f<span className="text-[11px]">x</span>
        </button>
      </div>
      <input aria-label="Formula" defaultValue="ID Number" className="ml-[3px] h-[26px] min-w-0 flex-1 border border-r-0 border-[#c6c6c6] bg-[#fdfdfd] pl-[11px] text-[13px]" />
    </div>
  );
}

/* ---------- grid ---------- */

const COLUMNS: { id: string; w: number }[] = [
  { id: "A", w: 87 },
  { id: "B", w: 200 },
  { id: "C", w: 147 },
  { id: "D", w: 312 },
  { id: "E", w: 102 },
  { id: "F", w: 75 },
  ...["G", "H", "I", "J", "K", "L", "M"].map((id) => ({ id, w: 64 })),
];

const DATA: string[][] = [
  ["ID Number", "Company", "Name", "Email", "Phone Number"],
  ["636995 8316", "Lorem Fringilla Ornare Corp.", "", "magna.tellus@libero.edu", "(373) 271-85"],
  ["699328 8114", "Cras Incorporated", "Watkins, Meredith H.", "Suspendisse.commodo.tincidunt@faucibusid.ca", "(409) 689-95"],
  ["906459 1523", "Dictum Sapien Aenean LLC", "Alvarez, Tyrone L.", "nisi@Aliquam.ca", "(820) 779-60"],
  ["445097 4466", "Aliquam Rutrum Lorem Ltd", "Short, Bruno V.", "mauris.aliquam@turpisIncondimentum.ca", "(485) 838-11"],
  ["803419 4293", "Imperdiet Limited", "English, Genevieve R.", "et.eros.Proin@antedictumcursus.ca", "(846) 646-54"],
  ["437305 6672", "Curabitur PC", "Holloway, Cleo I.", "lacinia.at.iaculis@Nulladignissim.net", "(514) 159-89"],
  ["495902 2668", "Vulputate Eu LLC", "Evans, Nelle I.", "luctus.sit.amet@amet.com", "(491) 217-54"],
  ["562662 1311", "Pede Cras Vulputate Corp.", "Cash, Daphne H.", "dolor.sit.amet@magna.net", "(423) 848-79"],
  ["946869 3529", "Interdum Enim Non Associates", "Petty, Hilel E.", "Nunc.ut.erat@Phasellus.net", "(889) 926-93"],
  ["085069 0082", "Semper Nam LLC", "Dean, Barbara L.", "In.lorem.Donec@aliquetlobortis.ca", "(880) 312-63"],
  ["169461 3660", "Nibh Aliquam Ornare Institute", "Douglas, Jerome A.", "diam.luctus.lobortis@tortordictumeu.edu", "(233) 967-44"],
  ["915642 0094", "Lectus Pede Ultrices Ltd", "Franks, Allegra T.", "blandit@et.edu", "(543) 735-77"],
  ["467921 3118", "Pede LLC", "Houston, Genevieve J.", "Nam.porttitor@magna.edu", "(783) 188-04"],
  ["533754 3127", "Volutpat Nulla Ltd", "Briggs, Lance P.", "fringilla.Donec.feugiat@ipsumprimisin.edu", "(233) 587-34"],
  ["615293 3278", "Eu Nibh Industries", "Vega, Evan A.", "non@arcu.ca", "(973) 909-18"],
];

function RowHead({ n }: { n: number }) {
  const on = n >= 2 && n <= 17;
  return (
    <th scope="row" className={"h-[20px] border-r border-b p-0 pt-px text-center font-normal " + (on ? "border-[#b5b5b5] border-r-[#9a9a9a] bg-[#d2d2d2] text-[#217346]" : "border-[#c6c6c6] border-r-[#9a9a9a] bg-[#e6e6e6] text-[#444444]")}>
      {n}
    </th>
  );
}

function Grid() {
  const rest = Array.from({ length: 10 }, (_, i) => i + 18);
  return (
    <div className="relative min-h-0 flex-1 overflow-hidden">
      <table className="w-[1397px] table-fixed border-separate border-spacing-0 bg-white text-[13px] leading-[18px] text-black">
        <colgroup>
          <col style={{ width: 26 }} />
          {COLUMNS.map((c) => (
            <col key={c.id} style={{ width: c.w }} />
          ))}
        </colgroup>
        <thead>
          <tr>
            <th className="h-[20px] border-r border-b border-[#b5b5b5] bg-[#e6e6e6] p-0">
              <svg width="11" height="11" viewBox="0 0 11 11" className="ml-auto mr-[3px]" aria-label="Select all"><path d="M11 0V11H0z" fill="#b4b4b4" /></svg>
            </th>
            {COLUMNS.map((c, i) => (
              <th
                key={c.id}
                scope="col"
                className={"h-[20px] border-r border-[#b5b5b5] p-0 text-center font-normal " + (i < 6 ? "border-b-2 border-b-[#217346] bg-[#d2d2d2] text-[#217346]" : "border-b border-b-[#999999] bg-[#e6e6e6] text-[#444444]")}
              >
                {c.id}
              </th>
            ))}
          </tr>
        </thead>
        <tbody>
          <tr>
            <RowHead n={1} />
            <td colSpan={6} className="border-r border-b border-[#d4d4d4] p-0 pt-px text-center">Contact List</td>
            {COLUMNS.slice(6).map((c) => (
              <td key={c.id} className="border-r border-b border-[#d4d4d4] p-0" />
            ))}
          </tr>
          {DATA.map((row, r) => (
            <tr key={r}>
              <RowHead n={r + 2} />
              {COLUMNS.map((c, i) => (
                <td key={c.id} className={"h-[20px] overflow-hidden border-r border-b pt-px pr-0 pb-0 pl-[2px] whitespace-nowrap " + (i > 5 ? "border-[#d4d4d4]" : r === 0 && i === 0 ? "border-[#a0a0a0] bg-white" : "border-[#a0a0a0] bg-[#c6c6c6]")}>
                  {row[i]}
                </td>
              ))}
            </tr>
          ))}
          {rest.map((n) => (
            <tr key={n}>
              <RowHead n={n} />
              {COLUMNS.map((c) => (
                <td key={c.id} className="border-r border-b border-[#d4d4d4] p-0" />
              ))}
            </tr>
          ))}
        </tbody>
      </table>
      <div className="pointer-events-none absolute left-[24px] top-[38px] h-[323px] w-[926px] border-2 border-[#217346] shadow-[inset_0_1px_0_0_#ffffff]" />
    </div>
  );
}

/* ---------- hand-drawn notes over the sheet ---------- */

function Annotation() {
  return (
    <>
      <svg className="pointer-events-none absolute left-0 top-0 z-30" width="1364" height="755" viewBox="0 0 1364 755" fill="none" stroke="#000" strokeWidth="5" strokeLinecap="round" strokeLinejoin="round" aria-hidden="true">
        <ellipse cx="1085.500" cy="432.500" rx="274" ry="39.500" />
        <path d="M781 573L824 458M816 466L824 457L828 471" />
      </svg>
      <p className="pointer-events-none absolute left-[547px] top-[588px] z-30 font-['DejaVu_Sans',sans-serif] text-[18px] leading-[24px] whitespace-nowrap text-black">This row is a good place to look</p>
    </>
  );
}

export default function App() {
  return (
    <div className="relative flex h-screen flex-col overflow-hidden bg-[#e6e6e6] font-['Noto_Sans','Open_Sans',sans-serif]">
      <header className="bg-[#217346]">
        <TitleBar />
        <Tabs />
      </header>
      <Ribbon />
      <FormulaBar />
      <Grid />
      <Annotation />
    </div>
  );
}
